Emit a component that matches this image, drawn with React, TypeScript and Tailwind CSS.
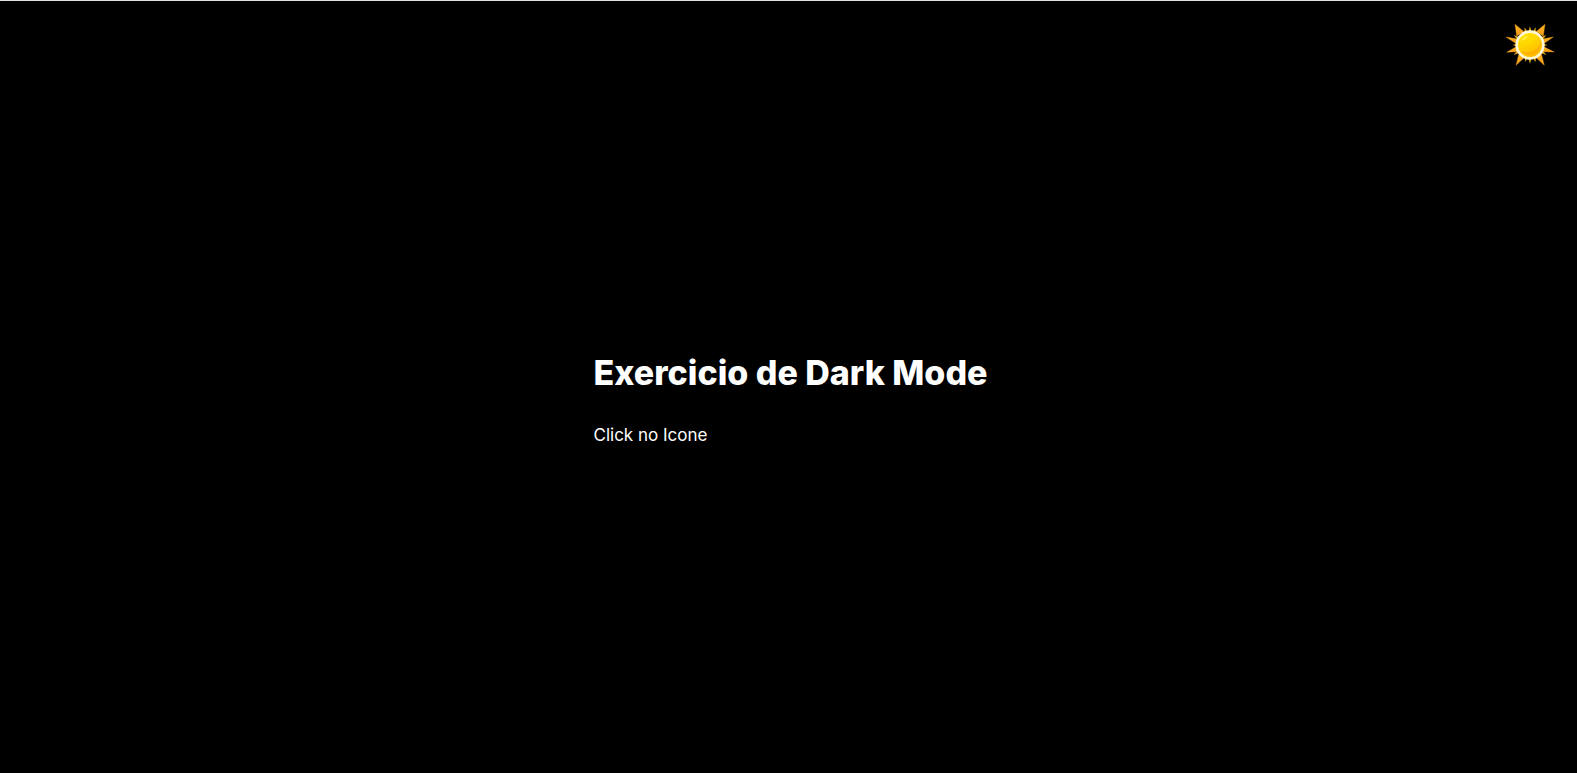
import { useState } from "react";

const longRays = [
  "54,28 59,63 81,50",
  "144,28 117,50 139,63",
  "27,66 56,85 62,72",
  "169,66 136,72 142,85",
  "29,112 56,96 62,110",
  "172,111 142,96 136,110",
  "57,151 66,116 83,127",
  "142,151 116,127 133,116",
];

const shortRays = [
  "99,34 94,50 104,50",
  "83,37 82,54 91,50",
  "116,37 107,50 116,54",
  "46,90 60,86 60,94",
  "152,90 138,86 138,94",
  "50,60 60,73 66,66",
  "148,60 132,66 138,73",
  "50,120 61,106 67,114",
  "148,120 131,114 137,106",
  "99,146 94,130 104,130",
  "84,141 83,126 91,130",
  "116,141 107,130 116,126",
];

function SunIcon() {
  return (
    <svg viewBox="24 24 150 132" className="h-11 w-[50px]" aria-hidden="true">
      <defs>
        <linearGradient id="rays" x1="0" y1="0" x2="0" y2="1">
          <stop offset="0" stopColor="#ffb51c" />
          <stop offset="1" stopColor="#f29a1c" />
        </linearGradient>
        <linearGradient id="disc" x1="0.2" y1="0" x2="0.8" y2="1">
          <stop offset="0" stopColor="#ffe800" />
          <stop offset="0.5" stopColor="#ffcf00" />
          <stop offset="1" stopColor="#ffb800" />
        </linearGradient>
      </defs>
      <g fill="#d9a514">
        {shortRays.map((points) => (
          <polygon key={points} points={points} />
        ))}
      </g>
      <g fill="url(#rays)" stroke="#f5a51c" strokeWidth="1" strokeLinejoin="round">
        {longRays.map((points) => (
          <polygon key={points} points={points} />
        ))}
      </g>
      <circle cx="99" cy="90" r="44" fill="#fff8d6" />
      <circle cx="99" cy="90" r="36" fill="url(#disc)" />
      <path d="M68 92a31 29 0 0 1 52-24c-9 3-10 16-24 19-11 2-18-1-28 5Z" fill="#ffd900" />
      <path d="M72 78q7-14 21-16-4 13-21 16Z" fill="#fff04a" />
      <path d="M70 106a34 34 0 0 0 60-30c2 27-34 46-60 30Z" fill="#ffb000" />
    </svg>
  );
}

export default function App() {
  const [dark, setDark] = useState(true);

  return (
    <div
      className={`relative flex min-h-screen flex-col border-t border-[#dfe3e1] font-[Inter,sans-serif] ${
        dark ? "bg-black text-white" : "bg-white text-black"
      }`}
    >
      <button
        type="button"
        aria-label="Alternar tema"
        onClick={() => setDark(!dark)}
        className="absolute top-[22px] right-[22px] cursor-pointer"
      >
        <SunIcon />
      </button>
      <main className="flex flex-1 items-center justify-center pt-[22px] pl-1">
        <div className="flex flex-col gap-[26px]">
          <h1 className="text-[34px] leading-12 font-extrabold">Exercicio de Dark Mode</h1>
          <p className="text-[17px] leading-6">Click no Icone</p>
        </div>
      </main>
    </div>
  );
}
